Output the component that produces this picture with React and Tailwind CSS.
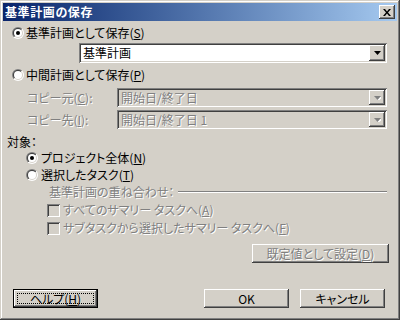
const font = "font-['Noto_Sans_CJK_JP','Noto_Sans_CJK_SC',sans-serif] [font-feature-settings:'palt']";

const raised =
    "shadow-[inset_-1px_-1px_#404040,inset_1px_1px_#ffffff,inset_-2px_-2px_#808080,inset_2px_2px_#d4d0c8]";
const sunken =
    "shadow-[inset_1px_1px_#808080,inset_-1px_-1px_#ffffff,inset_2px_2px_#404040,inset_-2px_-2px_#d4d0c8]";
const disabledText = "text-[#808080] [text-shadow:1px_1px_0_#ffffff]";

function Radio({checked}) {
    return (
        <svg width="12" height="12" viewBox="0 0 12 12" className="shrink-0">
            <defs>
                <linearGradient id="ro" x1="0" y1="0" x2="1" y2="1">
                    <stop offset="50%" stopColor="#808080"/>
                    <stop offset="50%" stopColor="#ffffff"/>
                </linearGradient>
                <linearGradient id="ri" x1="0" y1="0" x2="1" y2="1">
                    <stop offset="50%" stopColor="#404040"/>
                    <stop offset="50%" stopColor="#d4d0c8"/>
                </linearGradient>
            </defs>
            <circle cx="6" cy="6" r="6" fill="url(#ro)"/>
            <circle cx="6" cy="6" r="5" fill="url(#ri)"/>
            <circle cx="6" cy="6" r="4" fill="#ffffff"/>
            {checked && <circle cx="6" cy="6" r="2" fill="#000000"/>}
        </svg>
    );
}

function Check() {
    return <div className={`w-[13px] h-[13px] shrink-0 bg-[#d4d0c8] ${sunken}`}/>;
}

function Mn({children}) {
    return <span className="underline underline-offset-[1px]">{children}</span>;
}

function Combo({value, disabled, width}) {
    return (
        <div className={`h-[19px] flex items-center p-[2px] ${sunken} ${disabled ? "bg-[#d4d0c8]" : "bg-white"}`}
             style={{width}}>
            <div className={`flex-1 pl-[2px] leading-[15px] ${disabled ? disabledText : "text-black"}`}>{value}</div>
            <div className={`w-[16px] h-[15px] bg-[#d4d0c8] flex items-center justify-center ${raised}`}>
                <svg width="7" height="4" viewBox="0 0 7 4">
                    {disabled && <path d="M1 1h7L4.5 5z" fill="#ffffff"/>}
                    <path d="M0 0h7L3.5 4z" fill={disabled ? "#808080" : "#000000"}/>
                </svg>
            </div>
        </div>
    );
}

function Button({children, disabled, focus, className = ""}) {
    return (
        <div className={`h-[19px] bg-[#d4d0c8] ${focus ? "border border-black" : ""} ${className}`}>
            <div className={`h-full w-full flex items-center justify-center ${raised} ${disabled ? disabledText : "text-black"}`}>
                {focus ? (
                    <div className="flex-1 mx-[3px] h-[11px] border border-dotted border-black flex items-center justify-center leading-[11px]">
                        {children}
                    </div>
                ) : children}
            </div>
        </div>
    );
}

export default function App() {
    return (
        <div className={`w-[400px] h-[320px] bg-[#d4d0c8] p-[3px] text-[12px] leading-[14px] flex flex-col ${font} shadow-[inset_-1px_-1px_#404040,inset_1px_1px_#d4d0c8,inset_-2px_-2px_#808080,inset_2px_2px_#ffffff]`}>
            {/* title bar */}
            <div className="h-[18px] flex items-center justify-between bg-gradient-to-r from-[#0a246a] to-[#a6caf0] pl-[2px] pr-[2px]">
                <span className="text-white font-bold text-[12px] tracking-[0.6px]">基準計画の保存</span>
                <div className={`w-[16px] h-[14px] bg-[#d4d0c8] flex items-center justify-center ${raised}`}>
                    <svg width="8" height="7" viewBox="0 0 8 7">
                        <path d="M0 0h2l2 2.5L6 0h2L5 3.5 8 7H6L4 4.5 2 7H0l3-3.5z" fill="#000"/>
                    </svg>
                </div>
            </div>

            <div className="flex flex-col">
                <div className="mt-[5px] ml-[9px] h-[14px] flex items-center gap-[2px]">
                    <Radio checked/>
                    <span>基準計画として保存(<Mn>S</Mn>)</span>
                </div>
                <div className="mt-[3px] ml-[76px]">
                    <div className={`h-[20px] w-[308px] bg-white p-[2px] flex items-center ${sunken}`}>
                        <div className="flex-1 pl-[2px]">基準計画</div>
                        <div className={`w-[16px] h-[16px] bg-[#d4d0c8] flex items-center justify-center ${raised}`}>
                            <svg width="7" height="4" viewBox="0 0 7 4"><path d="M0 0h7L3.5 4z" fill="#000"/></svg>
                        </div>
                    </div>
                </div>

                <div className="mt-[5px] ml-[9px] h-[14px] flex items-center gap-[2px]">
                    <Radio/>
                    <span>中間計画として保存(<Mn>P</Mn>)</span>
                </div>
                <div className="mt-[6px] ml-[24px] flex items-center">
                    <span className={`w-[90px] ${disabledText}`}>コピー元(<Mn>C</Mn>):</span>
                    <Combo value="開始日/終了日" disabled width={270}/>
                </div>
                <div className="mt-[3px] ml-[24px] flex items-center">
                    <span className={`w-[90px] ${disabledText}`}>コピー先(<Mn>I</Mn>):</span>
                    <Combo value="開始日/終了日 1" disabled width={270}/>
                </div>

                <div className="mt-[6px] ml-[4px] h-[14px] flex items-center">対象：</div>
                <div className="mt-[2px] ml-[23px] h-[14px] flex items-center gap-[3px]">
                    <Radio checked/>
                    <span>プロジェクト全体(<Mn>N</Mn>)</span>
                </div>
                <div className="mt-[3px] ml-[23px] h-[14px] flex items-center gap-[3px]">
                    <Radio/>
                    <span>選択したタスク(<Mn>T</Mn>)</span>
                </div>
                <div className="mt-[3px] ml-[46px] mr-[10px] h-[14px] flex items-center gap-[4px]">
                    <span className={disabledText}>基準計画の重ね合わせ：</span>
                    <div className="flex-1 h-[2px] border-t border-t-[#808080] border-b border-b-white"/>
                </div>
                <div className="mt-[4px] ml-[44px] h-[14px] flex items-center gap-[3px]">
                    <Check/>
                    <span className={disabledText}>すべてのサマリー タスクへ(<Mn>A</Mn>)</span>
                </div>
                <div className="mt-[4px] ml-[44px] h-[14px] flex items-center gap-[3px]">
                    <Check/>
                    <span className={disabledText}>サブタスクから選択したサマリー タスクへ(<Mn>F</Mn>)</span>
                </div>

                <div className="mt-[9px] flex justify-end pr-[8px]">
                    <Button disabled className="w-[137px]">既定値として設定(<Mn>D</Mn>)</Button>
                </div>

                <div className="mt-[26px] flex items-center pl-[10px] pr-[12px]">
                    <Button focus className="w-[85px]">ヘルプ(<Mn>H</Mn>)</Button>
                    <div className="flex-1"/>
                    <Button className="w-[85px]">OK</Button>
                    <Button className="w-[85px] ml-[11px]">キャンセル</Button>
                </div>
            </div>
        </div>
    );
}
